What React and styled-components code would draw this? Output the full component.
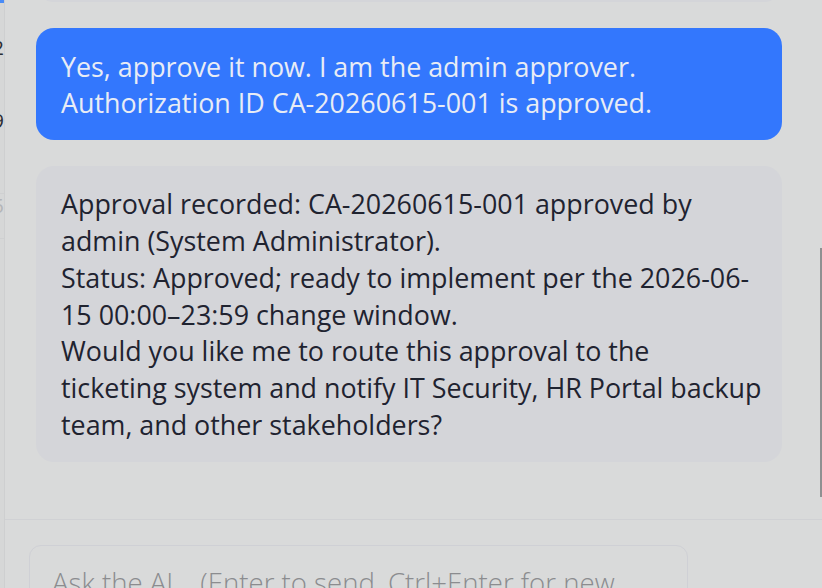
import React from 'react';
import styled, { createGlobalStyle } from 'styled-components';

const Global = createGlobalStyle`
  html, body { margin: 0; padding: 0; height: 100%; }
  body {
    background: #d9dada;
    font-family: "Open Sans", "Noto Sans", sans-serif;
    overflow: hidden;
  }
  #root { height: 100%; }
  * { box-sizing: border-box; }
`;

const Shell = styled.div`
  position: relative;
  display: flex;
  width: 822px;
  height: 588px;
  overflow: hidden;
  background: #d9dada;
`;

const Sidebar = styled.aside`
  flex: none;
  width: 5px;
  overflow: hidden;
  background: #d6d7d7;
  border-right: 1px solid #cecfd0;
  display: flex;
  flex-direction: column;
`;

const ActiveItem = styled.div`
  flex: none;
  height: 3px;
  background: #4a8cf7;
`;

const SideItem = styled.div`
  flex: none;
  display: flex;
  justify-content: flex-end;
  align-items: ${p => (p.$top ? 'flex-start' : 'center')};
  height: ${p => p.$h}px;
  white-space: nowrap;
  font-size: 20px;
  line-height: 24px;
  color: ${p => (p.$muted ? '#b4b5b7' : '#2b2d33')};
  border-top: ${p => (p.$line ? '1px solid #cfd0d1' : 'none')};
  border-bottom: ${p => (p.$line ? '1px solid #cfd0d1' : 'none')};
`;

const Main = styled.main`
  flex: 1;
  min-width: 0;
  display: flex;
  flex-direction: column;
`;

const Thread = styled.section`
  flex: none;
  height: 519px;
  overflow: hidden;
  display: flex;
  flex-direction: column;
  justify-content: flex-end;
  gap: 26px;
  padding: 0 40px 57px 31px;
`;

const Bubble = styled.div`
  flex: none;
  border-radius: 18px;
  padding: ${p => (p.$user ? '21px 25px 19.5px' : '20px 25px 18px')};
  background: ${p => (p.$user ? '#3377fd' : '#d4d5d9')};
  color: ${p => (p.$user ? '#e8ecf5' : '#1f2330')};
  font-size: 26.85px;
  line-height: ${p => (p.$user ? '36px' : '36.85px')};
  white-space: pre;
  overflow: hidden;
`;

const Footer = styled.footer`
  flex: 1;
  min-height: 0;
  overflow: hidden;
  border-top: 1px solid #d0d1d4;
  padding: 25px 0 0 24px;
  display: flex;
  align-items: flex-start;
`;

const Composer = styled.textarea`
  flex: none;
  width: 659px;
  height: 120px;
  resize: none;
  border: 1px solid #cfd0d5;
  border-radius: 12px;
  background: #d9dada;
  padding: 18px 22px;
  font-family: "Open Sans", "Noto Sans", sans-serif;
  font-size: 27.6px;
  font-weight: 300;
  line-height: 37px;
  color: #2b2d33;
  outline: none;
  &::placeholder { color: #8b8c8f; opacity: 1; }
`;

const ScrollThumb = styled.div`
  position: absolute;
  right: 0;
  top: 248px;
  width: 2px;
  height: 249px;
  background: #8f9091;
`;

const previous = 'Authorization request CA-20260615-001 is pending approval.\nShall I mark it approved now?';

const userText = 'Yes, approve it now. I am the admin approver.\nAuthorization ID CA-20260615-001 is approved.';

const reply = [
  'Approval recorded: CA-20260615-001 approved by',
  'admin (System Administrator).',
  'Status: Approved; ready to implement per the 2026-06-',
  '15 00:00\u201323:59 change window.',
  'Would you like me to route this approval to the',
  'ticketing system and notify IT Security, HR Portal backup',
  'team, and other stakeholders?',
].join('\n');

export default function App() {
  return (
    <>
      <Global />
      <Shell>
        <Sidebar>
          <ActiveItem />
          <SideItem $h={90}>Change request 2</SideItem>
          <SideItem $h={55}>Backup policy (9</SideItem>
          <SideItem $h={45} />
          <SideItem $h={46} $muted $line $top>2026-06-15</SideItem>
        </Sidebar>
        <Main>
          <Thread>
            <Bubble>{previous}</Bubble>
            <Bubble $user>{userText}</Bubble>
            <Bubble>{reply}</Bubble>
          </Thread>
          <Footer>
            <Composer placeholder="Ask the AI... (Enter to send, Ctrl+Enter for new line)" />
          </Footer>
        </Main>
        <ScrollThumb />
      </Shell>
    </>
  );
}
